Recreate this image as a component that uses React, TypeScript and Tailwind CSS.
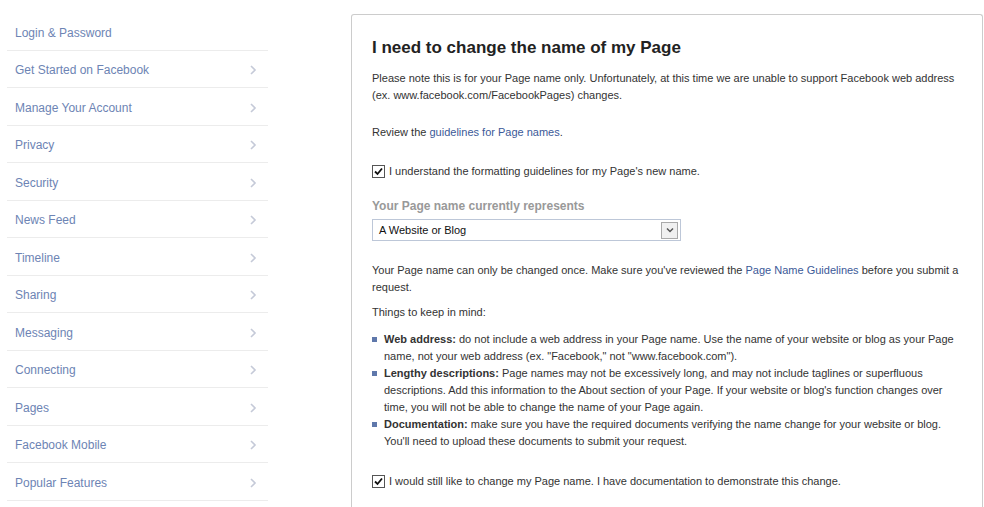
import React from 'react';

const navItems = [
  'Login & Password',
  'Get Started on Facebook',
  'Manage Your Account',
  'Privacy',
  'Security',
  'News Feed',
  'Timeline',
  'Sharing',
  'Messaging',
  'Connecting',
  'Pages',
  'Facebook Mobile',
  'Popular Features',
];

const Chevron: React.FC = () => (
  <svg width="7" height="10" viewBox="0 0 7 10" className="text-[#c5cad8]">
    <path d="M1 1l4 4-4 4" fill="none" stroke="currentColor" strokeWidth="1.6" />
  </svg>
);

const CheckBox: React.FC = () => (
  <span className="flex h-[13px] w-[13px] shrink-0 items-center justify-center border border-[#555] bg-white">
    <svg width="9" height="9" viewBox="0 0 9 9">
      <path d="M1 4.5l2.5 2.5L8 1.5" fill="none" stroke="#111" strokeWidth="1.8" />
    </svg>
  </span>
);

const Bullet: React.FC<{ title: string; children: React.ReactNode }> = ({ title, children }) => (
  <li className="flex">
    <span className="mt-[6px] mr-[7px] h-[5px] w-[5px] shrink-0 bg-[#5f78ab]" />
    <span>
      <b className="font-bold">{title}</b> {children}
    </span>
  </li>
);

const App: React.FC = () => {
  return (
    <div className="flex h-[507px] overflow-hidden bg-white font-['Liberation_Sans',Arial,sans-serif] text-[11px] text-[#333]">
      {/* Sidebar */}
      <div className="w-[268px] shrink-0 pt-[13px] pl-[7px]">
        {navItems.map((item, i) => (
          <div
            key={item}
            className="flex h-[37.5px] items-center justify-between border-b border-[#ececec] pt-[3px] pl-[8px] pr-[11px] text-[12px] text-[#6d84b4]"
          >
            <span>{item}</span>
            {i > 0 && <Chevron />}
          </div>
        ))}
      </div>

      {/* Main panel */}
      <div className="ml-[83px] mt-[14px] mr-[1px] flex-1 rounded-t-[3px] border border-b-0 border-[#cccccc] pl-[20px] pt-[22px]">
        <h1 className="text-[17px] font-bold leading-[22px] text-[#222]">I need to change the name of my Page</h1>

        <p className="mt-[11px] leading-[17px]">
          Please note this is for your Page name only. Unfortunately, at this time we are unable to support Facebook web address
          <br />
          (ex. www.facebook.com/FacebookPages) changes.
        </p>

        <p className="mt-[20px] leading-[17px]">
          Review the <span className="text-[#3b5998]">guidelines for Page names</span>.
        </p>

        <label className="mt-[22px] flex items-center gap-[4px] leading-[17px]">
          <CheckBox />
          <span>I understand the formatting guidelines for my Page's new name.</span>
        </label>

        <div className="mt-[18px] text-[12px] font-bold leading-[17px] text-[#999]">Your Page name currently represents</div>

        <div className="mt-[4px] flex h-[22px] w-[309px] items-center justify-between border border-[#bdc7d8] pl-[6px] pr-[2px]">
          <span className="text-[#111]">A Website or Blog</span>
          <span className="flex h-[17px] w-[17px] items-center justify-center border border-[#a9a9a9] bg-[#f0f0f0]">
            <svg width="8" height="6" viewBox="0 0 8 6">
              <path d="M1 1.5l3 3 3-3" fill="none" stroke="#555" strokeWidth="1.5" />
            </svg>
          </span>
        </div>

        <p className="mt-[21px] leading-[17px]">
          Your Page name can only be changed once. Make sure you've reviewed the{' '}
          <span className="text-[#3b5998]">Page Name Guidelines</span> before you submit a
          <br />
          request.
        </p>

        <p className="mt-[8px] leading-[17px]">Things to keep in mind:</p>

        <ul className="mt-[10px] leading-[17px]">
          <Bullet title="Web address:">
            do not include a web address in your Page name. Use the name of your website or blog as your Page
            <br />
            name, not your web address (ex. "Facebook," not "www.facebook.com").
          </Bullet>
          <Bullet title="Lengthy descriptions:">
            Page names may not be excessively long, and may not include taglines or superfluous
            <br />
            descriptions. Add this information to the About section of your Page. If your website or blog's function changes over
            <br />
            time, you will not be able to change the name of your Page again.
          </Bullet>
          <Bullet title="Documentation:">
            make sure you have the required documents verifying the name change for your website or blog.
            <br />
            You'll need to upload these documents to submit your request.
          </Bullet>
        </ul>

        <label className="mt-[23px] flex items-center gap-[4px] leading-[17px]">
          <CheckBox />
          <span>I would still like to change my Page name. I have documentation to demonstrate this change.</span>
        </label>
      </div>
    </div>
  );
};

export default App;
